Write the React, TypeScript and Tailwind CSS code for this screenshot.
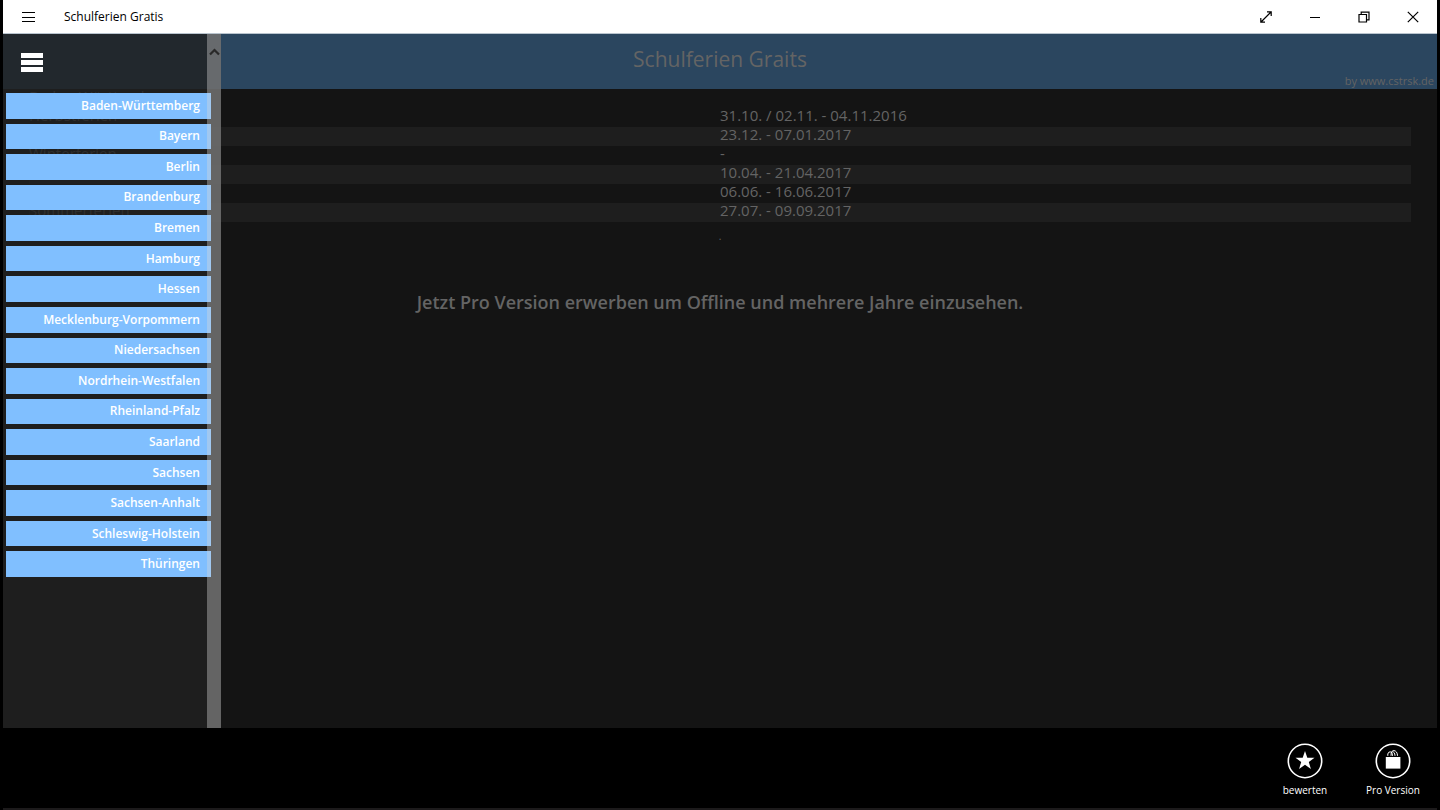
import React from "react";

const states = [
  "Baden-Württemberg", "Bayern", "Berlin", "Brandenburg", "Bremen", "Hamburg",
  "Hessen", "Mecklenburg-Vorpommern", "Niedersachsen", "Nordrhein-Westfalen",
  "Rheinland-Pfalz", "Saarland", "Sachsen", "Sachsen-Anhalt",
  "Schleswig-Holstein", "Thüringen",
];

const holidays = [
  ["Herbstferien", "31.10. / 02.11. - 04.11.2016"],
  ["Weihnachtsferien", "23.12. - 07.01.2017"],
  ["Winterferien", "-"],
  ["Osterferien", "10.04. - 21.04.2017"],
  ["Pfingstferien", "06.06. - 16.06.2017"],
  ["Sommerferien", "27.07. - 09.09.2017"],
];

function TitleBar() {
  const control = "flex w-[49px] items-center justify-center";
  return (
    <header className="flex h-[34px] shrink-0 items-stretch border-b border-[#b9c4ce] bg-white text-black">
      <button type="button" aria-label="App-Menü" className={control}>
        <svg width="14" height="12" viewBox="0 0 14 12" stroke="currentColor" shapeRendering="crispEdges">
          <path d="M0.5 1.5H13.5M0.5 6.5H13.5M0.5 10.5H13.5" />
        </svg>
      </button>
      <span className="flex flex-1 items-center pl-3 text-xs">Schulferien Gratis</span>
      <button type="button" aria-label="Vollbild" className={control}>
        <svg width="12" height="12" viewBox="0 0 12 12" fill="none" stroke="currentColor" strokeWidth="1.2">
          <path d="M1 11 11 1M7 .8H11.2V5M.8 7V11.2H5" />
        </svg>
      </button>
      <button type="button" aria-label="Minimieren" className={control}>
        <svg width="12" height="12" viewBox="0 0 12 12" stroke="currentColor" shapeRendering="crispEdges">
          <path d="M1 6.5H11" />
        </svg>
      </button>
      <button type="button" aria-label="Verkleinern" className={control}>
        <svg width="12" height="12" viewBox="0 0 12 12" fill="none" stroke="currentColor" strokeWidth="1.2">
          <path d="M1 3.5H8.5V11H1ZM3.2 3.3V1.2H11V8.8H8.7" />
        </svg>
      </button>
      <button type="button" aria-label="Schließen" className={control}>
        <svg width="12" height="12" viewBox="0 0 12 12" stroke="currentColor" strokeWidth="1.2">
          <path d="M.8.8 11.2 11.2M11.2.8.8 11.2" />
        </svg>
      </button>
    </header>
  );
}

function Drawer() {
  return (
    <nav aria-label="Bundesländer" className="absolute inset-y-0 left-0 w-[218px] bg-[#202020]/80">
      <button type="button" aria-label="Menü" className="flex h-[55px] items-center pl-[18px] pt-px">
        <svg width="22" height="19" viewBox="0 0 22 19" fill="#fff" shapeRendering="crispEdges">
          <path d="M0 0H22V5H0ZM0 7H22V12H0ZM0 14H22V19H0Z" />
        </svg>
      </button>
      <ul className="mr-[10px] ml-[3px] mt-1 grid h-[484px] auto-rows-fr gap-[5px]">
        {states.map((name) => (
          <li key={name} className="flex">
            <button type="button" className="flex-1 bg-[#80bfff] pr-[11px] text-right text-xs font-semibold text-white">
              {name}
            </button>
          </li>
        ))}
      </ul>
      <div className="absolute inset-y-0 right-0 flex w-[14px] justify-center bg-[#d7d7d7]/38 pt-[14px]">
        <svg width="11" height="8" viewBox="0 0 11 8" fill="none" stroke="#292929" strokeWidth="2.2">
          <path d="M1 6.5 5.5 2 10 6.5" />
        </svg>
      </div>
    </nav>
  );
}

function Content() {
  return (
    <main className="min-h-0 flex-1 bg-[#141414] text-[#646464]">
      <div className="relative flex h-[55px] items-center justify-center bg-[#2b465f]">
        <h1 className="pb-1 text-[21px]">Schulferien Graits</h1>
        <a href="https://www.cstrsk.de" className="absolute right-[3px] bottom-0 text-[11px]">
          by www.cstrsk.de
        </a>
      </div>
      <div className="px-[26px]">
        <table className="w-full table-fixed border-collapse text-[15px] leading-[15px]">
          <tbody>
            <tr>
              <th colSpan={2} className="p-0 pb-1 text-left font-normal">Baden-Württemberg</th>
            </tr>
            {holidays.map(([name, dates]) => (
              <tr key={name} className="odd:bg-[#1e1e1e]">
                <th scope="row" className="p-0 pb-1 text-left font-normal">{name}</th>
                <td className="p-0 pb-1">{dates}</td>
              </tr>
            ))}
          </tbody>
        </table>
        <p className="mt-1 text-center text-[10px] leading-5">.</p>
        <p className="mt-[42px] text-center text-lg font-semibold">
          Jetzt Pro Version erwerben um Offline und mehrere Jahre einzusehen.
        </p>
      </div>
    </main>
  );
}

function AppBar() {
  const item = "flex w-[88px] flex-col items-center gap-1 text-[10px] text-white";
  return (
    <footer className="flex h-[82px] shrink-0 justify-end border-b-2 border-[#1c1a1b] bg-black pt-[15px]">
      <button type="button" className={item}>
        <svg width="36" height="36" viewBox="0 0 36 36" fill="#fff">
          <circle cx="18" cy="18" r="16.7" fill="none" stroke="#fff" strokeWidth="1.6" />
          <path d="M18 8 20.3 14.8H27.5L21.8 19.1 23.9 26 18 21.8 12.1 26 14.2 19.1 8.5 14.8H15.7Z" />
        </svg>
        bewerten
      </button>
      <button type="button" className={item}>
        <svg width="36" height="36" viewBox="0 0 36 36" fill="#fff">
          <circle cx="18" cy="18" r="16.7" fill="none" stroke="#fff" strokeWidth="1.6" />
          <path d="M10.8 14H25.4V25.6H10.8Z" />
          <path d="M12.8 12.8V11Q13.3 8.8 15.2 8.8Q17.4 8.8 17.6 12.8M16 12.8Q16 7.5 18.8 7.5Q22.3 8 22.5 12.8M17.2 8.8Q19.8 8.6 20 12.8" fill="none" stroke="#fff" strokeWidth="1" />
        </svg>
        Pro Version
      </button>
    </footer>
  );
}

export default function App() {
  return (
    <div className="flex h-screen flex-col bg-black px-[3px] font-['Open_Sans','Noto_Sans',sans-serif]">
      <TitleBar />
      <div className="relative flex min-h-0 flex-1 flex-col">
        <Content />
        <Drawer />
      </div>
      <AppBar />
    </div>
  );
}
